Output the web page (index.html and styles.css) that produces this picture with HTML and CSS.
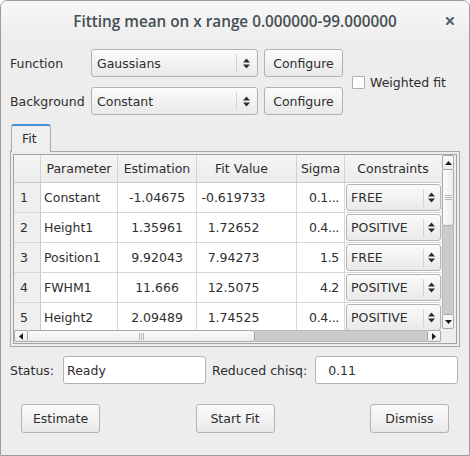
FILE: index.html
```html
<!DOCTYPE html>
<html>
<head>
<meta charset="utf-8">
<link rel="stylesheet" href="styles.css">
</head>
<body>
<div class="window">
  <div class="titlebar">
    <div></div>
    <div class="title">Fitting mean on x range 0.000000-99.000000</div>
    <div class="close">
      <svg width="8" height="8" viewBox="0 0 8 8"><path d="M1 1 L7 7 M7 1 L1 7" stroke="#55626a" stroke-width="2.2" stroke-linecap="square"/></svg>
    </div>
  </div>
  <div class="content">
    <div class="top-grid">
      <div class="lbl">Function</div>
      <div class="combo combo-main"><span class="combo-text">Gaussians</span><span class="combo-arrow"><svg width="7" height="11" viewBox="0 0 7 11"><path d="M3.5 0.5 L7 4.5 L0 4.5 Z M0 6.5 L7 6.5 L3.5 10.5 Z" fill="#2e2e2e"/></svg></span></div>
      <div class="btn btn-conf">Configure</div>
      <div class="check-wrap"><span class="checkbox"></span><span>Weighted fit</span></div>
      <div class="lbl">Background</div>
      <div class="combo combo-main"><span class="combo-text">Constant</span><span class="combo-arrow"><svg width="7" height="11" viewBox="0 0 7 11"><path d="M3.5 0.5 L7 4.5 L0 4.5 Z M0 6.5 L7 6.5 L3.5 10.5 Z" fill="#2e2e2e"/></svg></span></div>
      <div class="btn btn-conf">Configure</div>
    </div>

    <div class="tabbar">
      <div class="tab-gap"></div>
      <div class="tab">Fit</div>
      <div class="tab-fill"></div>
    </div>
    <div class="pane">
      <div class="scrollarea">
        <div class="viewport">
          <div class="grid">
            <div class="hcell corner-h"></div>
            <div class="hcell">Parameter</div>
            <div class="hcell">Estimation</div>
            <div class="hcell fv-h">Fit Value</div>
            <div class="hcell">Sigma</div>
            <div class="hcell last">Constraints</div>

            <div class="rh">1</div>
            <div class="cell left">Constant</div>
            <div class="cell center">-1.04675</div>
            <div class="cell fv">-0.619733</div>
            <div class="cell right">0.1...</div>
            <div class="cell ccell"><div class="combo combo-small"><span class="combo-text">FREE</span><span class="combo-arrow"><svg width="7" height="11" viewBox="0 0 7 11"><path d="M3.5 0.5 L7 4.5 L0 4.5 Z M0 6.5 L7 6.5 L3.5 10.5 Z" fill="#2e2e2e"/></svg></span></div></div>

            <div class="rh">2</div>
            <div class="cell left">Height1</div>
            <div class="cell center">1.35961</div>
            <div class="cell fv">1.72652</div>
            <div class="cell right">0.4...</div>
            <div class="cell ccell"><div class="combo combo-small"><span class="combo-text">POSITIVE</span><span class="combo-arrow"><svg width="7" height="11" viewBox="0 0 7 11"><path d="M3.5 0.5 L7 4.5 L0 4.5 Z M0 6.5 L7 6.5 L3.5 10.5 Z" fill="#2e2e2e"/></svg></span></div></div>

            <div class="rh">3</div>
            <div class="cell left">Position1</div>
            <div class="cell center">9.92043</div>
            <div class="cell fv">7.94273</div>
            <div class="cell right">1.5</div>
            <div class="cell ccell"><div class="combo combo-small"><span class="combo-text">FREE</span><span class="combo-arrow"><svg width="7" height="11" viewBox="0 0 7 11"><path d="M3.5 0.5 L7 4.5 L0 4.5 Z M0 6.5 L7 6.5 L3.5 10.5 Z" fill="#2e2e2e"/></svg></span></div></div>

            <div class="rh">4</div>
            <div class="cell left">FWHM1</div>
            <div class="cell center">11.666</div>
            <div class="cell fv">12.5075</div>
            <div class="cell right">4.2</div>
            <div class="cell ccell"><div class="combo combo-small"><span class="combo-text">POSITIVE</span><span class="combo-arrow"><svg width="7" height="11" viewBox="0 0 7 11"><path d="M3.5 0.5 L7 4.5 L0 4.5 Z M0 6.5 L7 6.5 L3.5 10.5 Z" fill="#2e2e2e"/></svg></span></div></div>

            <div class="rh">5</div>
            <div class="cell left">Height2</div>
            <div class="cell center">2.09489</div>
            <div class="cell fv">1.74525</div>
            <div class="cell right">0.4...</div>
            <div class="cell ccell"><div class="combo combo-small"><span class="combo-text">POSITIVE</span><span class="combo-arrow"><svg width="7" height="11" viewBox="0 0 7 11"><path d="M3.5 0.5 L7 4.5 L0 4.5 Z M0 6.5 L7 6.5 L3.5 10.5 Z" fill="#2e2e2e"/></svg></span></div></div>
          </div>
        </div>
        <div class="vscroll">
          <div class="sbtn sbtn-v"><svg width="7" height="4" viewBox="0 0 7 4"><path d="M3.5 0 L7 4 L0 4 Z" fill="#1e1e1e"/></svg></div>
          <div class="vthumb"><svg width="7" height="7" viewBox="0 0 7 7"><path d="M0 1.5 H7 M0 3.5 H7 M0 5.5 H7" stroke="#b8b8b8" stroke-width="1"/></svg></div>
          <div class="vtrack"></div>
          <div class="sbtn sbtn-v"><svg width="7" height="4" viewBox="0 0 7 4"><path d="M0 0 L7 0 L3.5 4 Z" fill="#1e1e1e"/></svg></div>
        </div>
        <div class="hscroll">
          <div class="sbtn sbtn-h"><svg width="4" height="7" viewBox="0 0 4 7"><path d="M4 0 L4 7 L0 3.5 Z" fill="#1e1e1e"/></svg></div>
          <div class="hthumb"><svg width="7" height="7" viewBox="0 0 7 7"><path d="M1.5 0 V7 M3.5 0 V7 M5.5 0 V7" stroke="#b8b8b8" stroke-width="1"/></svg></div>
          <div class="htrack"></div>
          <div class="sbtn sbtn-h"><svg width="4" height="7" viewBox="0 0 4 7"><path d="M0 0 L4 3.5 L0 7 Z" fill="#1e1e1e"/></svg></div>
        </div>
        <div class="sc-corner"></div>
      </div>
    </div>

    <div class="status-row">
      <div class="lbl">Status:</div>
      <div class="input input-status">Ready</div>
      <div class="lbl lbl-chi">Reduced chisq:</div>
      <div class="input input-chi">0.11</div>
    </div>

    <div class="buttons">
      <div class="btn btn-bottom">Estimate</div>
      <div class="btn btn-bottom">Start Fit</div>
      <div class="btn btn-bottom">Dismiss</div>
    </div>
  </div>
</div>
</body>
</html>
```

FILE: styles.css
```css
* { box-sizing: border-box; }
html, body {
  margin: 0;
  padding: 0;
  background: #ffffff;
}
body {
  font-family: "DejaVu Sans", sans-serif;
  font-size: 12.5px;
  color: #2e2e2e;
}
.window {
  width: 470px;
  height: 456px;
  border: 1px solid #9c9c9c;
  border-radius: 7px 7px 0 0;
  background: #ededed;
  overflow: hidden;
}
.titlebar {
  height: 40px;
  display: grid;
  grid-template-columns: 1fr auto 1fr;
  align-items: center;
  background: linear-gradient(#f8f8f8, #ededed);
}
.title {
  font-family: "Open Sans", sans-serif;
  font-weight: 600;
  font-size: 15.3px;
  color: #454e52;
  padding-bottom: 1px;
}
.close {
  justify-self: end;
  padding-right: 15px;
  display: flex;
  align-items: center;
}
.content {
  padding: 8px 0 0 0;
}
.top-grid {
  display: grid;
  grid-template-columns: 75px 167px 79px 1fr;
  grid-template-rows: 28px 28px;
  column-gap: 6px;
  row-gap: 10px;
  padding-left: 9px;
  align-items: center;
}
.lbl { white-space: nowrap; }
.combo {
  display: flex;
  align-items: center;
  border: 1px solid #b3b3b3;
  border-radius: 3px;
  background: linear-gradient(#fbfbfb, #e9e9e9);
}
.combo-main { height: 28px; width: 167px; }
.combo-text { flex: 1; padding-left: 5px; white-space: nowrap; overflow: hidden; }
.combo-arrow {
  width: 21px;
  display: flex;
  align-items: center;
  padding-left: 6px;
  border-left: 1px solid #d3d3d3;
  margin: 4px 0;
  height: 18px;
}
.btn {
  display: flex;
  align-items: center;
  justify-content: center;
  border: 1px solid #b3b3b3;
  border-radius: 3px;
  background: linear-gradient(#fbfbfb, #e9e9e9);
  white-space: nowrap;
}
.btn-conf { height: 28px; width: 79px; }
.check-wrap {
  grid-column: 4;
  grid-row: 1 / span 2;
  display: flex;
  align-items: center;
  padding-left: 3px;
  gap: 5px;
}
.checkbox {
  width: 13px;
  height: 13px;
  border: 1px solid #b0b0b0;
  background: #fff;
  border-radius: 1px;
}

/* tabs */
.tabbar {
  margin-top: 9px;
  margin-left: 9px;
  width: 450px;
  height: 28px;
  display: flex;
}
.tab-gap { width: 1px; border-bottom: 1px solid #a9a9a9; }
.tab {
  width: 40px;
  border: 1px solid #a9a9a9;
  border-top: 2px solid #4a8fd8;
  border-bottom: none;
  border-radius: 3px 3px 0 0;
  background: #efefef;
  display: flex;
  align-items: center;
  padding-left: 10px;
  padding-bottom: 2px;
}
.tab-fill { flex: 1; border-bottom: 1px solid #a9a9a9; }
.pane {
  margin-left: 9px;
  width: 450px;
  border: 1px solid #a9a9a9;
  border-top: none;
  padding: 2px;
}
.scrollarea {
  border: 1px solid #a3a3a3;
  display: grid;
  grid-template-columns: 427px 15px;
  grid-template-rows: 175px 13px;
  background: #ededed;
}
.viewport {
  overflow: hidden;
  background: #fff;
}
.grid {
  display: grid;
  grid-template-columns: 27px 77px 79px 100px 48px 96px;
  grid-template-rows: 28px repeat(5, 30px);
}
.hcell {
  background: linear-gradient(#f5f5f5, #ececec);
  border-bottom: 1px solid #c9c9c9;
  border-right: 1px solid #d2d2d2;
  display: flex;
  align-items: center;
  justify-content: center;
  white-space: nowrap;
}
.hcell.fv-h { padding-right: 10px; }
.hcell.last { border-right: none; }
.rh {
  background: #efefef;
  border-right: 1px solid #c9c9c9;
  border-bottom: 1px solid #d8d8d8;
  display: flex;
  align-items: center;
  padding-left: 6px;
}
.cell {
  border-right: 1px solid #d6d6d6;
  border-bottom: 1px solid #d6d6d6;
  display: flex;
  align-items: center;
  white-space: nowrap;
  overflow: hidden;
}
.cell.left { padding-left: 3px; }
.cell.center { justify-content: center; }
.cell.fv { justify-content: center; padding-right: 26px; }
.cell.right { justify-content: flex-end; padding-right: 5px; letter-spacing: -0.3px; }
.cell.ccell {
  border-right: none;
  align-items: flex-start;
  padding: 1px 0 0 1px;
}
.combo-small { width: 95px; height: 27px; }
.combo-small .combo-text { padding-left: 4px; }
.combo-small .combo-arrow { width: 17px; padding-left: 4px; }

/* scrollbars */
.vscroll {
  display: flex;
  flex-direction: column;
  padding: 0 2px 1px 1px;
}
.sbtn {
  display: flex;
  align-items: center;
  justify-content: center;
  background: linear-gradient(#fbfbfb, #ececec);
  border: 1px solid #a9a9a9;
  border-radius: 2px;
}
.sbtn-v { height: 15px; }
.vthumb {
  height: 56px;
  background: linear-gradient(90deg, #fafafa, #eeeeee);
  border: 1px solid #a9a9a9;
  border-top: none;
  border-radius: 0 0 3px 3px;
  display: flex;
  align-items: center;
  justify-content: center;
}
.vtrack { flex: 1; background: #cbcbcb; border-left: 1px solid #b9b9b9; border-right: 1px solid #b9b9b9; }
.hscroll {
  display: flex;
  padding: 0 0 1px 0;
}
.sbtn-h { width: 14px; }
.hthumb {
  width: 227px;
  background: linear-gradient(#fafafa, #eeeeee);
  border: 1px solid #a9a9a9;
  border-left: none;
  border-radius: 0 3px 3px 0;
  display: flex;
  align-items: center;
  justify-content: center;
}
.htrack { flex: 1; background: #cbcbcb; border-top: 1px solid #b9b9b9; border-bottom: 1px solid #b9b9b9; }
.sc-corner { background: #ededed; }

/* status */
.status-row {
  margin-top: 9px;
  display: flex;
  align-items: center;
  padding-left: 9px;
  height: 28px;
}
.input {
  height: 28px;
  background: #fff;
  border: 1px solid #b3b3b3;
  border-radius: 3px;
  display: flex;
  align-items: center;
}
.input-status { width: 143px; margin-left: 9px; padding-left: 3px; }
.lbl-chi { margin-left: 6px; }
.input-chi { width: 143px; margin-left: 8px; padding-left: 12px; }

.buttons {
  margin-top: 20px;
  display: flex;
  justify-content: space-between;
  padding: 0 20px 0 20px;
}
.btn-bottom { width: 79px; height: 29px; }
```
